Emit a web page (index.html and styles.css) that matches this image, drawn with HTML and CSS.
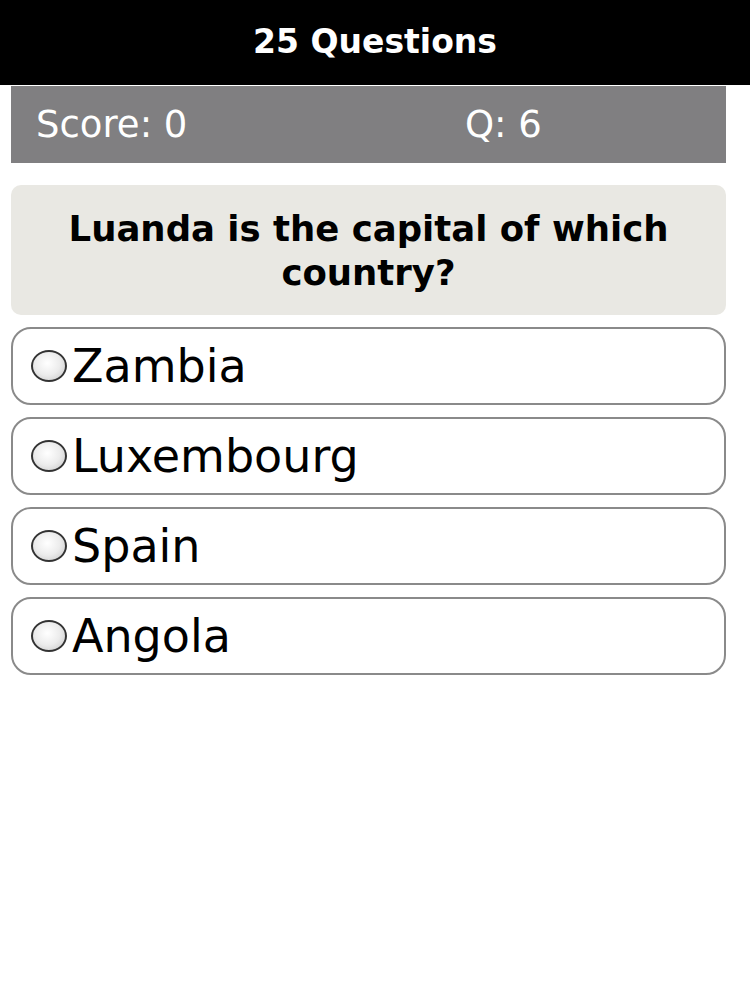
FILE: index.html
```html
<!DOCTYPE html>
<html lang="en">
  <head>
    <meta charset="UTF-8" />
    <meta name="viewport" content="width=device-width, initial-scale=1.0" />
    <title>Quiz</title>
    <link rel="stylesheet" href="styles.css">
  </head>
  <body>
    <div class="header">25 Questions</div>
    <div class="content">
      <div class="scorebar">
        <div class="score">Score: 0</div>
        <div class="qnum">Q: 6</div>
      </div>
      <div class="question">Luanda is the capital of which country?</div>
      <ul class="options">
        <li class="option"><span class="radio"></span>Zambia</li>
        <li class="option"><span class="radio"></span>Luxembourg</li>
        <li class="option"><span class="radio"></span>Spain</li>
        <li class="option"><span class="radio"></span>Angola</li>
      </ul>
    </div>
  </body>
</html>
```

FILE: styles.css
```css
ul,
li {
  list-style: none;
  padding: 0;
  margin: 0;
}
body {
  margin: 0;
  background-color: #fff;
  font-family: "DejaVu Sans", "Liberation Sans", sans-serif;
}
.header {
  height: 85px;
  background-color: #000;
  color: #fff;
  text-align: center;
  line-height: 84px;
  font-size: 33px;
  font-weight: bold;
}
.content {
  width: 715px;
  margin-left: 11px;
}
.scorebar {
  display: grid;
  grid-template-columns: 60% 40%;
  height: 77px;
  margin-top: 1px;
  background-color: #807f81;
  color: #fff;
  font-size: 37px;
  line-height: 77px;
}
.scorebar .score,
.scorebar .qnum {
  padding-left: 25px;
}
.question {
  margin-top: 22px;
  padding: 22px 40px;
  height: 86px;
  background-color: #e9e8e3;
  border-radius: 10px;
  text-align: center;
  font-size: 35.5px;
  font-weight: bold;
  line-height: 44px;
  color: #000;
}
.options {
  display: flex;
  flex-direction: column;
  gap: 12px;
  margin-top: 12px;
}
.option {
  display: flex;
  align-items: center;
  box-sizing: border-box;
  height: 78px;
  padding-left: 18px;
  border: 2px solid #8a8a8a;
  border-radius: 20px;
  font-size: 46px;
  color: #000;
}
.radio {
  flex-shrink: 0;
  box-sizing: border-box;
  width: 36px;
  height: 32px;
  margin-right: 5px;
  border: 2px solid #333;
  border-radius: 50%;
  background: radial-gradient(ellipse at 45% 40%, #fff 0%, #ececec 50%, #c4c4c4 100%);
}
```
